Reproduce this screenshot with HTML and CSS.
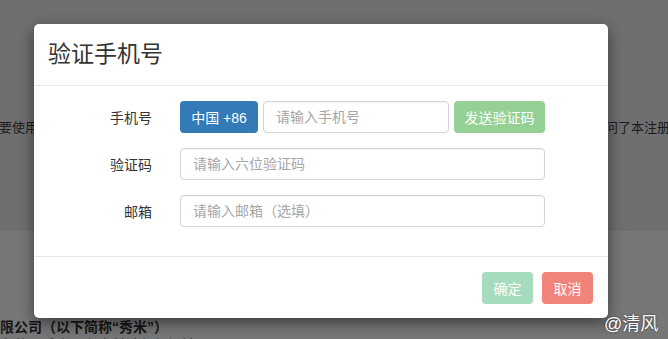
FILE: index.html
```html
<!DOCTYPE html>
<html lang="zh-CN">
<head>
  <meta charset="UTF-8">
  <meta name="viewport" content="width=device-width, initial-scale=1.0">
  <title>验证手机号</title>
  <link rel="stylesheet" href="styles.css">
</head>
<body>
  <div class="page">
    <section class="page-top">
      <div class="page-line">
        <span class="line-left">要使用本服务</span>
        <span class="line-right">问了本注册协议</span>
      </div>
    </section>
    <section class="page-bottom">
      <p class="page-strong">限公司（以下简称“秀米”）</p>
      <p class="page-faint">在使用秀米服务之前请仔细阅读</p>
    </section>
  </div>

  <div class="modal">
    <div class="modal-header">
      <h4>验证手机号</h4>
    </div>
    <form class="modal-body">
      <div class="form-row">
        <label for="phone">手机号</label>
        <div class="controls">
          <button type="button" class="btn btn-blue">中国 +86</button>
          <input type="text" id="phone" class="input input-phone" placeholder="请输入手机号">
          <button type="button" class="btn btn-send">发送验证码</button>
        </div>
      </div>
      <div class="form-row">
        <label for="code">验证码</label>
        <div class="controls">
          <input type="text" id="code" class="input" placeholder="请输入六位验证码">
        </div>
      </div>
      <div class="form-row">
        <label for="email">邮箱</label>
        <div class="controls">
          <input type="text" id="email" class="input" placeholder="请输入邮箱（选填）">
        </div>
      </div>
    </form>
    <div class="modal-footer">
      <button type="button" class="btn btn-ok">确定</button>
      <button type="button" class="btn btn-cancel">取消</button>
    </div>
  </div>

  <div class="watermark">@清风</div>
</body>
</html>
```

FILE: styles.css
```css
* {
  margin: 0;
  padding: 0;
  box-sizing: border-box;
}

body {
  font-family: "Helvetica Neue", "Liberation Sans", "Noto Sans CJK SC", sans-serif;
  font-size: 14px;
  width: 668px;
  height: 339px;
  overflow: hidden;
  position: relative;
  background: #777;
}

.page-top {
  height: 231px;
  background: #6f6f6f;
  padding-top: 118px;
}

.page-line {
  display: grid;
  grid-template-columns: 605px 63px;
  font-size: 13px;
  color: #1c1c1c;
  white-space: nowrap;
  line-height: 20px;
}

.line-left,
.line-right {
  overflow: hidden;
}

.line-left {
  text-indent: -1px;
}

.page-bottom {
  height: 108px;
  background: #777;
  padding-top: 86px;
  overflow: hidden;
}

.page-strong {
  font-weight: bold;
  color: #161616;
  line-height: 20px;
  white-space: nowrap;
}

.page-faint {
  color: #333;
  line-height: 16px;
  white-space: nowrap;
}

.modal {
  position: absolute;
  left: 34px;
  top: 24px;
  width: 574px;
  background: #fff;
  border-radius: 5px;
  box-shadow: 0 5px 15px rgba(0, 0, 0, 0.5);
}

.modal-header {
  height: 62px;
  padding: 13px 14px;
  border-bottom: 1px solid #e8e8e8;
}

.modal-header h4 {
  font-size: 23px;
  font-weight: normal;
  color: #333;
  line-height: 34px;
}

.modal-body {
  padding: 15px 0 29px;
  display: flex;
  flex-direction: column;
  gap: 15px;
}

.form-row {
  display: flex;
  align-items: center;
}

.form-row label {
  width: 118px;
  text-align: right;
  color: #333;
  margin-right: 28px;
}

.controls {
  display: flex;
  gap: 5px;
  width: 365px;
}

.input {
  flex: 1;
  min-width: 0;
  height: 32px;
  border: 1px solid #d4d4d4;
  border-radius: 4px;
  padding: 0 12px;
  font: inherit;
  color: #555;
  box-shadow: inset 0 1px 1px rgba(0, 0, 0, 0.05);
}

.input::placeholder {
  color: #a6a6a6;
}

.input-phone {
  flex: 0 0 186px;
}

.btn {
  flex-shrink: 0;
  height: 32px;
  border: none;
  border-radius: 4px;
  padding: 0;
  font: inherit;
  color: #fff;
  white-space: nowrap;
  text-align: center;
}

.btn-blue {
  width: 78px;
  background: #337ab7;
}

.btn-send {
  width: 91px;
  background: #95d195;
}

.modal-footer {
  border-top: 1px solid #e8e8e8;
  height: 62px;
  padding: 15px 15px;
  display: flex;
  justify-content: flex-end;
  gap: 9px;
}

.btn-ok {
  width: 51px;
  background: #a5dcbd;
}

.btn-cancel {
  width: 51px;
  background: #f0837a;
}

.watermark {
  position: absolute;
  left: 604px;
  top: 309px;
  font-size: 18px;
  color: #fff;
  text-shadow: 0 0 2px rgba(0, 0, 0, 0.7);
}
```
